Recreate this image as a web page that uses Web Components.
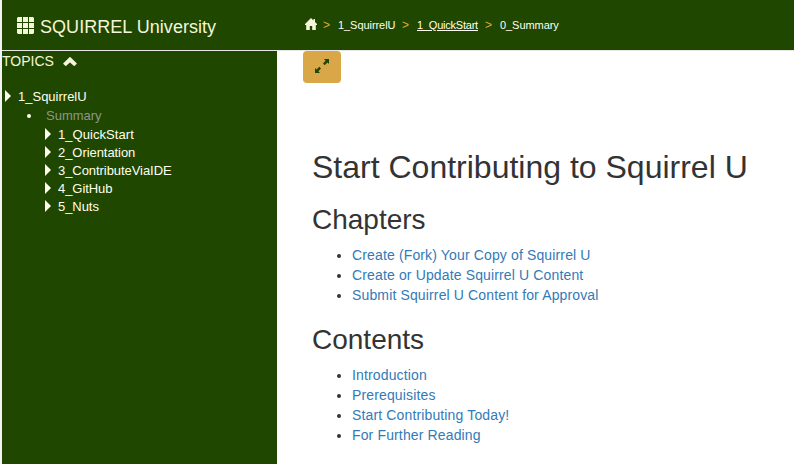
<!DOCTYPE html>
<html lang="en">
<head>
<meta charset="utf-8">
<title>SQUIRREL University</title>
<style>
html, body { margin: 0; height: 100%; overflow: hidden; background: #fff; }
body { font-family: "Liberation Sans", Arial, sans-serif; }
</style>
</head>
<body>
<su-app></su-app>
<script>
const define = (name, html) => {
  const template = document.createElement("template");
  template.innerHTML = html;
  customElements.define(name, class extends HTMLElement {
    constructor() {
      super();
      this.attachShadow({ mode: "open" }).append(template.content.cloneNode(true));
    }
  });
};

define("su-brand", `
<style>
:host { display: flex; align-items: center; gap: 6px; color: #f5f5dc; font-size: 18px; line-height: 20px; letter-spacing: .04px; white-space: nowrap; }
svg { display: block; width: 17px; height: 17px; margin-top: -2px; }
</style>
<svg viewBox="0 0 17 17" fill="currentColor">
<path d="M1 0h4v5H0V1zM6 0h5v5H6zM12 0h4l1 1v4h-5zM0 6h5v5H0zM6 6h5v5H6zM12 6h5v5h-5zM0 12h5v5H1l-1-1zM6 12h5v5H6zM12 12h5v4l-1 1h-4z"/></svg>
<span><slot></slot></span>`);

define("su-crumbs", `
<style>
:host { display: flex; align-items: center; color: #fffff0; font-size: 11px; line-height: 16px; white-space: nowrap; }
svg { display: block; width: 12px; height: 12px; margin-top: -2px; }
i { font-style: normal; color: #e0a83c; width: 7px; font-size: 12px; margin: 0 8px 0 7px; }
.home { margin-left: 6px; }
span { width: 57px; letter-spacing: -.06px; }
u { width: 61px; letter-spacing: -.22px; text-underline-offset: 1px; }
</style>
<svg viewBox="0 0 12 12" fill="#f5f5dc"><path d="M6 0L8.500 2.500V1H10v3L12 6v1h-1.200V12H7.200V8H4.800v4H1.200V7H0V6z"/></svg>
<i class="home">&gt;</i><span>1_SquirrelU</span><i>&gt;</i><u>1_QuickStart</u><i>&gt;</i><span>0_Summary</span>`);

define("su-header", `
<style>
:host { display: flex; box-sizing: border-box; height: 51px; background: #1f4700; border-bottom: 1px solid #e7e7e7; padding-left: 15px; }
su-brand { height: 53px; width: 288px; }
su-crumbs { height: 50px; }
</style>
<su-brand>SQUIRREL University</su-brand><su-crumbs></su-crumbs>`);

define("su-node", `
<style>
:host { display: flex; align-items: center; height: 18px; color: #fffff0; font-size: 13px; line-height: 18px; white-space: nowrap; }
svg { display: block; width: 6px; height: 12px; margin: -2px 7px 0 0; }
</style>
<svg viewBox="0 0 6 12" fill="#fffff0"><path d="M0 0L6 6L0 12z"/></svg><span><slot></slot></span>`);

define("su-sidebar", `
<style>
:host { display: block; width: 275px; background: #1f4700; color: #f5f5dc; }
.topics { display: flex; align-items: center; gap: 9.500px; height: 20px; font-size: 14px; }
.topics svg { width: 14px; height: 9px; }
nav { padding: 17px 0 0 3px; }
.leaf { display: flex; align-items: center; gap: 15px; height: 18px; padding: 0 0 2px 22px; font-size: 13px; color: #8f9589; }
.leaf::before { content: ""; width: 4px; height: 4px; margin-top: 1px; border-radius: 50%; background: #fffff0; }
.children { padding-left: 40px; }
.wide { letter-spacing: .06px; }
.narrow { letter-spacing: -.06px; }
</style>
<div class="topics"><span>TOPICS</span><svg viewBox="0 0 14 9" fill="currentColor"><path d="M7 0l6.700 6.500L11.300 9L7 5.200L2.700 9L.3 6.500z" stroke="currentColor" stroke-width=".5"/></svg></div>
<nav>
<su-node>1_SquirrelU</su-node>
<div class="leaf">Summary</div>
<div class="children"><su-node class="wide">1_QuickStart</su-node><su-node class="narrow">2_Orientation</su-node><su-node class="narrow">3_ContributeViaIDE</su-node><su-node class="narrow">4_GitHub</su-node><su-node class="narrow">5_Nuts</su-node></div>
</nav>`);

define("su-expand", `
<style>
:host { display: flex; align-items: center; justify-content: center; width: 38px; height: 32px; border-radius: 4px; background: #d9a648; box-sizing: border-box; }
svg { display: block; width: 14px; height: 14px; margin-top: -2px; }
</style>
<svg viewBox="0 0 14 14" fill="#1f4700"><path d="M9 0H14v5l-1.500-1.400L9.700 6.200L8 4.500l2.600-2.800zM0 9l1.500 1.400L4.300 7.800L6 9.500L3.400 12.300L5 14H0z"/></svg>`);

define("su-section", `
<style>
:host { display: block; color: #333; }
::slotted(h2) { margin: 0 0 10px; font-size: 28px; font-weight: 400; line-height: 30px; }
::slotted(ul) { margin: 0; padding-left: 40px; font-size: 14px; line-height: 20px; letter-spacing: .14px; }
</style>
<slot></slot>`);

define("su-article", `
<style>
:host { display: flex; flex-direction: column; gap: 20px; color: #333; white-space: nowrap; }
h1 { margin: 0; font-size: 32px; line-height: 35px; font-weight: 400; }
a { color: #337ab7; }
</style>
<h1>Start Contributing to Squirrel U</h1>
<su-section><h2>Chapters</h2><ul><li><a>Create (Fork) Your Copy of Squirrel U</a></li><li><a>Create or Update Squirrel U Content</a></li><li><a>Submit Squirrel U Content for Approval</a></li></ul></su-section>
<su-section><h2>Contents</h2><ul><li><a>Introduction</a></li><li><a>Prerequisites</a></li><li><a>Start Contributing Today!</a></li><li><a>For Further Reading</a></li></ul></su-section>`);

define("su-app", `
<style>
:host { display: flex; flex-direction: column; box-sizing: border-box; height: 464px; border-left: 2px solid #f3f3f3; }
.body { display: flex; flex: 1; min-height: 0; }
main { padding-left: 26px; }
su-article { padding: 67px 0 0 9px; }
</style>
<su-header></su-header>
<div class="body"><su-sidebar></su-sidebar><main><su-expand></su-expand><su-article></su-article></main></div>`);
</script>
</body>
</html>
